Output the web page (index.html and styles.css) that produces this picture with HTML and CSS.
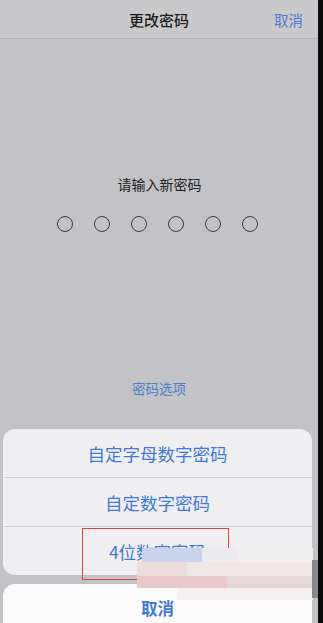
FILE: index.html
```html
<!DOCTYPE html>
<html lang="zh">
<head>
<meta charset="utf-8">
<link rel="stylesheet" href="styles.css">
</head>
<body>
<div class="screen">
  <div class="main">
    <header class="nav">
      <span class="nav-title">更改密码</span>
      <span class="nav-cancel">取消</span>
    </header>
    <div class="content">
      <div class="prompt">请输入新密码</div>
      <div class="dots">
        <span class="dot"></span><span class="dot"></span><span class="dot"></span>
        <span class="dot"></span><span class="dot"></span><span class="dot"></span>
      </div>
      <div class="options">密码选项</div>
    </div>
    <div class="sheet">
      <div class="group">
        <div class="row">自定字母数字密码</div>
        <div class="row">自定数字密码</div>
        <div class="row row-marked">4位数字密码<span class="mark"></span></div>
      </div>
      <div class="cancel">取消</div>
    </div>
    <div class="mosaic">
      <span class="m m1"></span><span class="m m2"></span><span class="m m3"></span>
      <span class="m m4"></span><span class="m m5"></span><span class="m m6"></span>
      <span class="m m7"></span><span class="m m8"></span>
    </div>
    <span class="edge-block"></span>
  </div>
  <div class="black-strip"></div>
</div>
</body>
</html>
```
FILE: styles.css
```css
html, body {
  margin: 0;
  padding: 0;
  height: 100%;
  overflow: hidden;
}
body {
  font-family: "Noto Sans CJK SC", "Noto Sans", sans-serif;
  background: #000;
}
.screen {
  display: flex;
  width: 323px;
  height: 623px;
}
.main {
  position: relative;
  width: 318px;
  height: 623px;
  background: #c3c3c7;
  display: flex;
  flex-direction: column;
  overflow: hidden;
}
.black-strip {
  width: 5px;
  background: #0a0a0a;
}
.nav {
  height: 38px;
  flex: none;
  background: #c9c9cc;
  border-bottom: 1px solid #b6b6ba;
  position: relative;
  display: flex;
  align-items: center;
  justify-content: center;
}
.nav-title {
  font-size: 15px;
  font-weight: 500;
  color: #1e1e20;
}
.nav-cancel {
  position: absolute;
  right: 15px;
  top: 9px;
  font-size: 14.5px;
  color: #4a7ed0;
}
.content {
  display: flex;
  flex-direction: column;
  align-items: center;
}
.prompt {
  margin-top: 135px;
  font-size: 14px;
  line-height: 20px;
  color: #222;
  padding-left: 1px;
}
.dots {
  margin-top: 22px;
  display: flex;
  gap: 21px;
  margin-right: 4px;
}
.dot {
  width: 14px;
  height: 14px;
  border: 1.3px solid #3c3c3e;
  border-radius: 50%;
}
.options {
  margin-top: 146px;
  font-size: 13.5px;
  line-height: 20px;
  color: #4d7ecb;
}
.sheet {
  margin: 31px 6px 0 3px;
  display: flex;
  flex-direction: column;
  gap: 9px;
}
.group {
  background: #efeff1;
  border-radius: 12px;
}
.row {
  position: relative;
  height: 49px;
  display: flex;
  align-items: center;
  justify-content: center;
  font-size: 17.5px;
  color: #3f7ad6;
  border-top: 1px solid #d3d3d7;
  box-sizing: border-box;
}
.row:first-child {
  border-top: none;
  height: 48px;
}
.mark {
  position: absolute;
  left: 79px;
  top: 1px;
  width: 145px;
  height: 50px;
  border: 1.5px solid #d8443f;
}
.cancel {
  background: #fbfbfc;
  border-radius: 12px 12px 0 0;
  height: 60px;
  display: flex;
  align-items: flex-start;
  justify-content: center;
  padding-top: 12px;
  box-sizing: border-box;
  font-size: 16.5px;
  font-weight: 600;
  color: #3f7ad6;
}
.mosaic {
  position: absolute;
  left: 137px;
  top: 548px;
  width: 176px;
  height: 52px;
}
.m {
  position: absolute;
  display: block;
}
.m1 { left: 5px; top: 0; width: 60px; height: 14px; background: #c9d4ec; }
.m2 { left: 65px; top: 0; width: 35px; height: 14px; background: #ececf0; }
.m3 { left: 0; top: 14px; width: 50px; height: 14px; background: #ecdcdc; }
.m4 { left: 50px; top: 14px; width: 126px; height: 14px; background: #f1e6e6; }
.m5 { left: 0; top: 28px; width: 90px; height: 12px; background: #e9c9c9; }
.m6 { left: 90px; top: 28px; width: 86px; height: 12px; background: #e4d8d8; }
.m7 { left: 40px; top: 40px; width: 136px; height: 12px; background: #f6f1f1; }
.m8 { left: 105px; top: 0; width: 71px; height: 14px; background: #f0eeee; }
.edge-block {
  position: absolute;
  left: 312px;
  top: 560px;
  width: 6px;
  height: 38px;
  background: #8a8a8c;
}
```
